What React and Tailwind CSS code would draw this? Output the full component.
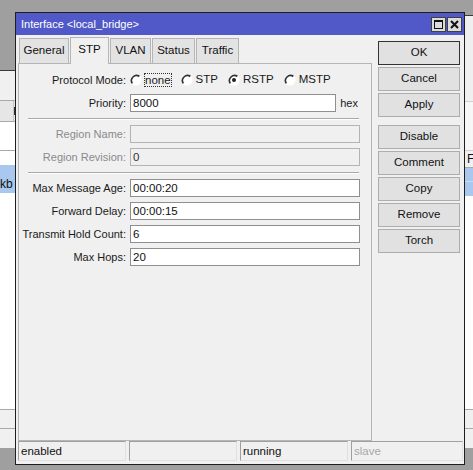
import React from "react";

const font = { fontFamily: '"Liberation Sans", Arial, sans-serif' };

function Radio({ label, checked, focused }) {
  return (
    <div className="flex items-center gap-[3px] mr-[10px]">
      <svg width="12" height="12" viewBox="0 0 12 12">
        <circle cx="6" cy="6" r="5.5" fill="#ffffff" />
        <path d="M9.5 2.5 A5 5 0 0 0 2.5 9.5" stroke="#303030" strokeWidth="1.6" fill="none" />
        <path d="M2.5 9.5 A5 5 0 0 0 9.5 2.5" stroke="#ffffff" strokeWidth="1.2" fill="none" />
        {checked && <circle cx="6" cy="6" r="2" fill="#202020" />}
      </svg>
      <span className={focused ? "outline outline-1 outline-dotted outline-[#333] leading-[12px]" : ""}>
        {label}
      </span>
    </div>
  );
}

function Field({ label, value, disabled, suffix }) {
  return (
    <div className="flex items-center h-[18px]">
      <div
        className={
          "w-[107px] shrink-0 text-right whitespace-nowrap flex justify-end " +
          (disabled ? "text-[#8a8a8a]" : "text-[#1a1a1a]")
        }
      >
        {label}
      </div>
      <div className="ml-[4px] flex items-center w-[230px]">
        <div
          className={
            "flex-1 h-[18px] border px-[2px] leading-[16px] text-[11.5px] " +
            (disabled ? "bg-[#f0f0f0] border-[#b4b4b4] text-[#333]" : "bg-white border-[#8f8f8f] text-[#111]")
          }
        >
          {value}
        </div>
        {suffix && <span className="ml-[4px] mr-[2px] text-[#1a1a1a]">{suffix}</span>}
      </div>
    </div>
  );
}

function Sep() {
  return (
    <div className="pl-[9px] h-[3px] pt-[1px]">
      <div className="w-[331px] h-[1px] bg-[#a8a8a8]" />
      <div className="w-[331px] h-[1px] bg-white" />
    </div>
  );
}

function Btn({ children, primary }) {
  return (
    <div
      className={
        "h-[24px] w-[82px] flex items-center justify-center bg-[#e1e1e1] border text-[#111] " +
        (primary ? "border-[#333]" : "border-[#adadad]")
      }
    >
      {children}
    </div>
  );
}

function Tab({ children, active, w }) {
  return (
    <div
      className={
        "flex items-center justify-center border border-[#b5b5b5] border-b-0 " +
        (active ? "h-[27px] bg-[#f0f0f0] relative z-10 mb-[-1px] pb-[2px]" : "h-[25px] bg-[#e3e3e3]")
      }
      style={{ width: w }}
    >
      {children}
    </div>
  );
}

function Cell({ children, w, muted }) {
  return (
    <div
      className={
        "border border-t-[#a0a0a0] border-l-[#a0a0a0] border-r-[#e0e0e0] border-b-[#e0e0e0] leading-[18px] pl-[2px] " +
        (w ? "w-[108px] " : "flex-1 ") +
        (muted ? "text-[#a8a8a8]" : "text-[#111]")
      }
    >
      {children}
    </div>
  );
}

export default function App() {
  return (
    <div className="relative w-[473px] h-[470px] bg-[#9f9f9f] overflow-hidden text-[11px]" style={font}>
      {/* background window, left */}
      <div className="absolute left-0 top-[70px] w-[20px] h-[378px] bg-[#f0f0f0] border-t border-[#3a3a3a] flex flex-col">
        <div className="h-[29px]" />
        <div className="h-[22px] bg-[#e6e6e6] border-y border-[#a9a9a9] flex">
          <div className="w-[14px] border-r border-[#c8c8c8]" />
          <div className="w-[2px] bg-[#333] my-[6px]" />
        </div>
        <div className="flex-1 bg-white flex flex-col">
          <div className="h-[29px] border-b border-[#a9a9a9]" />
          <div className="h-[14px]" />
          <div className="h-[28px] bg-[#a8c8ee] flex items-end pb-[3px] text-[12px] text-[#111] leading-none">kb</div>
          <div className="flex-1" />
          <div className="h-[19px] border-t border-[#a9a9a9] bg-[#f0f0f0]" />
          <div className="h-[20px] border-t border-[#a9a9a9] bg-[#f0f0f0]" />
        </div>
      </div>
      {/* background window, right */}
      <div className="absolute left-[462px] top-[15px] w-[20px] h-[433px] bg-[#f0f0f0] border-t border-[#3a3a3a] flex flex-col">
        <div className="h-[85px]" />
        <div className="h-[50px] bg-[#f7f7f7] border-y border-[#d0d0d0]" />
        <div className="h-[17px] pl-[5px] text-[12px] text-[#111] leading-[17px] border-b border-[#a9a9a9]">F</div>
        <div className="h-[14px] bg-[#a8c8ee] border-b border-[#c8daf2]" />
        <div className="h-[14px] bg-[#a8c8ee]" />
        <div className="flex-1 bg-white" />
        <div className="h-[19px] border-t border-[#a9a9a9]" />
        <div className="h-[20px] border-t border-[#a9a9a9]" />
      </div>

      {/* dialog */}
      <div className="absolute left-[15px] top-[12px] w-[450px] h-[453px] bg-[#f0f0f0] border border-[#1e1e1e] flex flex-col">
        <div className="h-[22px] bg-[#5159c9] flex items-center pl-[5px] pr-[2px] text-white shrink-0">
          <span className="flex-1">Interface &lt;local_bridge&gt;</span>
          <div className="flex gap-[1px]">
            <div className="w-[15px] h-[15px] bg-[#dcdcdc] border border-[#404040] flex items-center justify-center">
              <div className="w-[9px] h-[9px] border border-[#111] border-t-2" />
            </div>
            <div className="w-[15px] h-[15px] bg-[#dcdcdc] border border-[#404040] flex items-center justify-center">
              <svg width="9" height="9" viewBox="0 0 9 9">
                <path d="M1 1 L8 8 M8 1 L1 8" stroke="#111" strokeWidth="2" />
              </svg>
            </div>
          </div>
        </div>

        <div className="flex flex-1 pl-[2px] pt-[2px]">
          <div className="flex flex-col w-[354px]">
            <div className="flex items-end h-[26px] pl-[1px] gap-[1px] text-[#111] text-[11.5px]">
              <Tab w={50}>General</Tab>
              <Tab active w={39}>STP</Tab>
              <Tab w={41}>VLAN</Tab>
              <Tab w={43}>Status</Tab>
              <Tab w={43}>Traffic</Tab>
            </div>
            <div className="h-[378px] border border-[#b5b5b5] bg-[#f0f0f0] pt-[7px] flex flex-col gap-[5px]">
              <div className="flex items-center h-[18px]">
                <div className="w-[107px] shrink-0 text-right text-[#1a1a1a]">Protocol Mode:</div>
                <div className="ml-[4px] flex items-center text-[#1a1a1a] text-[11.5px]">
                  <Radio label="none" focused />
                  <Radio label="STP" />
                  <Radio label="RSTP" checked />
                  <Radio label="MSTP" />
                </div>
              </div>
              <Field label="Priority:" value="8000" suffix="hex" />
              <Sep />
              <Field label="Region Name:" value="" disabled />
              <Field label="Region Revision:" value="0" disabled />
              <Sep />
              <Field label="Max Message Age:" value="00:00:20" />
              <Field label="Forward Delay:" value="00:00:15" />
              <Field label="Transmit Hold Count:" value="6" />
              <Field label="Max Hops:" value="20" />
            </div>
          </div>

          <div className="ml-[6px] pt-[4px] flex flex-col text-[11.5px]">
            <div className="flex flex-col gap-[2px]">
              <Btn primary>OK</Btn>
              <Btn>Cancel</Btn>
              <Btn>Apply</Btn>
            </div>
            <div className="flex flex-col gap-[2px] mt-[8px]">
              <Btn>Disable</Btn>
              <Btn>Comment</Btn>
              <Btn>Copy</Btn>
              <Btn>Remove</Btn>
              <Btn>Torch</Btn>
            </div>
          </div>
        </div>

        <div className="flex gap-[3px] pl-[2px] pr-[1px] pb-[3px] h-[23px] shrink-0 text-[11.5px]">
          <Cell w>enabled</Cell>
          <Cell w />
          <Cell w>running</Cell>
          <Cell muted>slave</Cell>
        </div>
      </div>
    </div>
  );
}
